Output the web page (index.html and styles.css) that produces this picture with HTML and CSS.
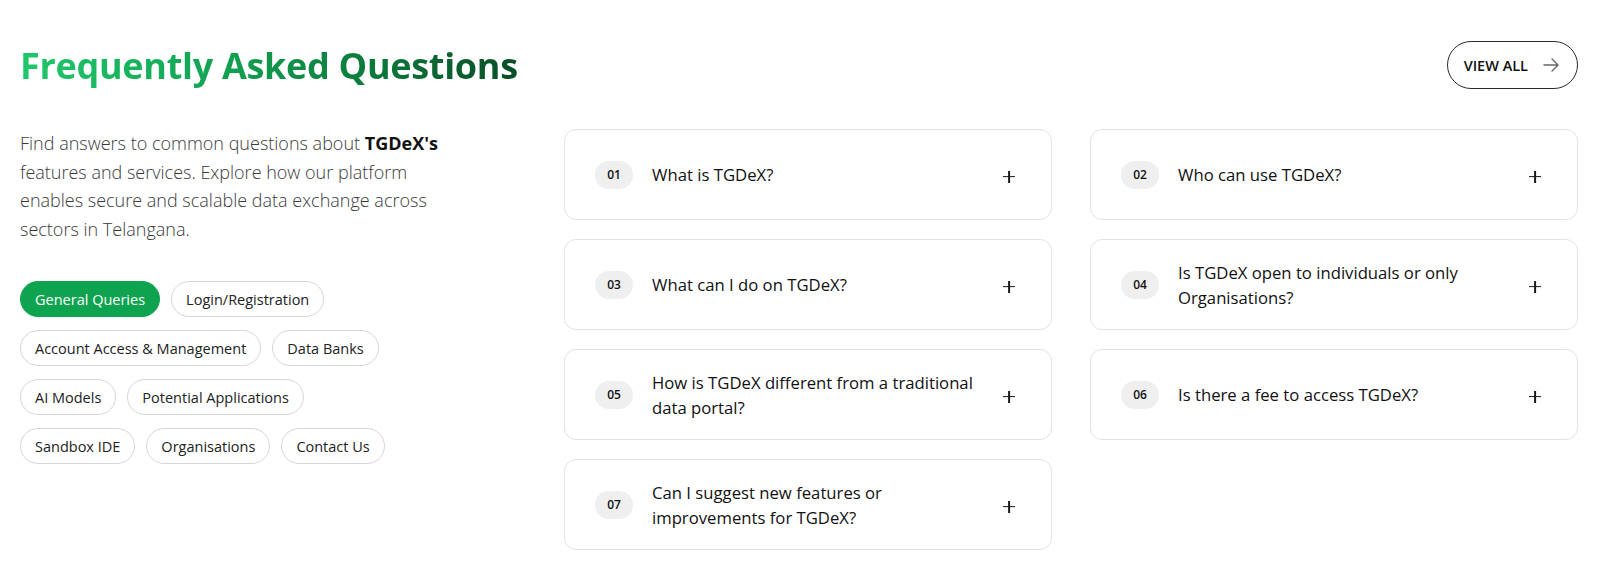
FILE: index.html
```html
<!DOCTYPE html>
<html lang="en">
<head>
<meta charset="utf-8">
<title>FAQ</title>
<link rel="stylesheet" href="styles.css">
</head>
<body>
<section class="faq">
  <header class="faq-head">
    <h1 class="faq-title">Frequently Asked Questions</h1>
    <a class="view-all" href="#">VIEW ALL
      <svg class="arrow" width="18" height="18" viewBox="0 0 18 18" fill="none" stroke="currentColor" stroke-width="1.4" stroke-linecap="round" stroke-linejoin="round"><path d="M2 9h14M10 3l6 6-6 6"/></svg>
    </a>
  </header>
  <div class="faq-body">
    <aside class="faq-side">
      <p class="intro">Find answers to common questions about <b>TGDeX's</b> features and services. Explore how our platform enables secure and scalable data exchange across sectors in Telangana.</p>
      <div class="chips">
        <span class="chip active">General Queries</span>
        <span class="chip">Login/Registration</span>
        <span class="chip">Account Access &amp; Management</span>
        <span class="chip">Data Banks</span>
        <span class="chip">AI Models</span>
        <span class="chip">Potential Applications</span>
        <span class="chip">Sandbox IDE</span>
        <span class="chip">Organisations</span>
        <span class="chip">Contact Us</span>
      </div>
    </aside>
    <div class="cards">
      <div class="col">
        <div class="card"><span class="num">01</span><span class="q">What is TGDeX?</span><span class="plus"></span></div>
        <div class="card"><span class="num">03</span><span class="q">What can I do on TGDeX?</span><span class="plus"></span></div>
        <div class="card"><span class="num">05</span><span class="q">How is TGDeX different from a traditional data portal?</span><span class="plus"></span></div>
        <div class="card"><span class="num">07</span><span class="q">Can I suggest new features or improvements for TGDeX?</span><span class="plus"></span></div>
      </div>
      <div class="col">
        <div class="card"><span class="num">02</span><span class="q">Who can use TGDeX?</span><span class="plus"></span></div>
        <div class="card"><span class="num">04</span><span class="q">Is TGDeX open to individuals or only Organisations?</span><span class="plus"></span></div>
        <div class="card"><span class="num">06</span><span class="q">Is there a fee to access TGDeX?</span><span class="plus"></span></div>
      </div>
    </div>
  </div>
</section>
</body>
</html>
```
FILE: styles.css
```css
* { box-sizing: border-box; }
html, body { margin: 0; background: #fff; }
body { font-family: "Open Sans", "Noto Sans", sans-serif; color: #111; }

.faq { padding: 41px 22px 0 20px; }

.faq-head {
  display: flex;
  justify-content: space-between;
  align-items: center;
  height: 48px;
}
.faq-title {
  margin: 0;
  font-size: 36px;
  font-weight: 700;
  letter-spacing: -0.3px;
  background: linear-gradient(90deg, #1fc76c 0%, #12a352 40%, #0c7a3c 70%, #0a4d26 100%);
  -webkit-background-clip: text;
  background-clip: text;
  color: transparent;
}
.view-all {
  display: flex;
  align-items: center;
  gap: 14px;
  height: 48px;
  padding: 0 17px 0 16px;
  border: 1px solid #2b2b2b;
  border-radius: 24px;
  color: #111;
  font-size: 14.5px;
  font-weight: 600;
  text-decoration: none;
}
.view-all .arrow { color: #666; }

.faq-body {
  display: grid;
  grid-template-columns: 480px 1fr;
  gap: 64px;
  margin-top: 40px;
}
.intro {
  margin: 0;
  width: 440px;
  font-size: 18px;
  line-height: 28.5px;
  font-weight: 300;
  color: #3a3a3a;
}
.intro b { font-weight: 700; color: #111; }

.chips {
  display: flex;
  flex-wrap: wrap;
  gap: 13px 11px;
  margin-top: 38px;
  width: 400px;
}
.chip {
  display: inline-flex;
  align-items: center;
  height: 36px;
  padding: 0 14px;
  border: 1px solid #d6d6d6;
  border-radius: 18px;
  font-size: 14.5px;
  color: #222;
}
.chip.active {
  background: #0ea44f;
  border-color: #0ea44f;
  color: #fff;
}

.cards {
  display: grid;
  grid-template-columns: 488px 488px;
  gap: 38px;
}
.col { display: flex; flex-direction: column; gap: 19px; }
.card {
  display: flex;
  align-items: center;
  height: 91px;
  padding: 0 30px 0 30px;
  border: 1px solid #e3e3e3;
  border-radius: 12px;
}
.num {
  flex: none;
  width: 38px;
  height: 28px;
  border-radius: 14px;
  background: #efefef;
  display: flex;
  align-items: center;
  justify-content: center;
  font-size: 12px;
  font-weight: 600;
  color: #111;
}
.q {
  flex: 1;
  margin: 0 16px 0 19px;
  font-size: 16.7px;
  line-height: 25px;
  font-weight: 500;
  color: #111;
}
.plus {
  flex: none;
  position: relative;
  width: 24px;
  height: 24px;
  margin-top: 4px;
}
.plus::before, .plus::after {
  content: "";
  position: absolute;
  left: 50%;
  top: 50%;
  background: #1a1a1a;
  transform: translate(-50%, -50%);
}
.plus::before { width: 12px; height: 1.8px; }
.plus::after { width: 1.8px; height: 12px; }
```
